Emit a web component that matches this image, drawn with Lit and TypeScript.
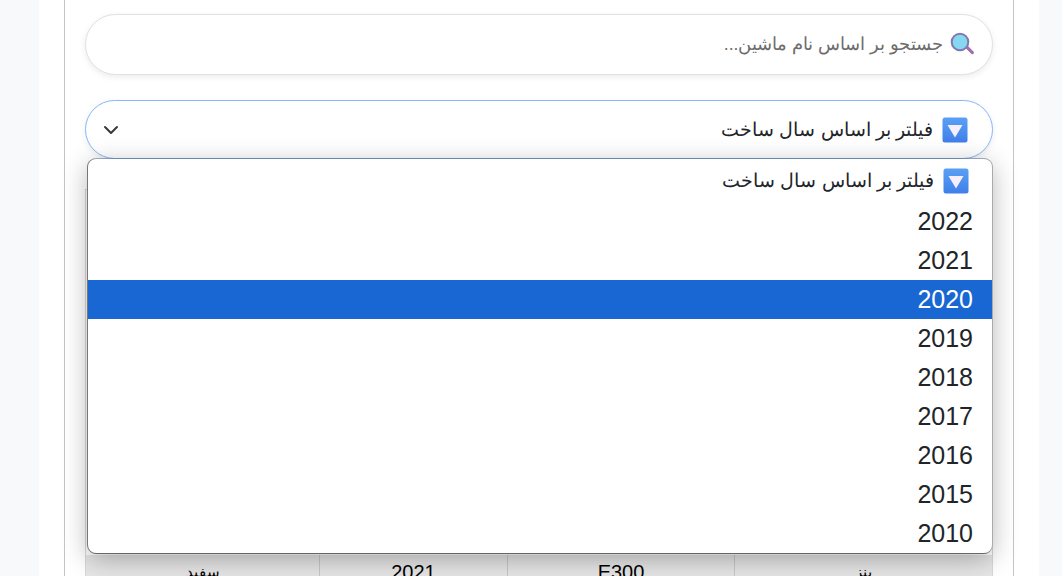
import { LitElement, html, css } from "lit";
import { customElement } from "lit/decorators.js";

const years = ["2022", "2021", "2020", "2019", "2018", "2017", "2016", "2015", "2010"];
const label = "فیلتر بر اساس سال ساخت";

const triangle = html`<svg class="tri" viewBox="0 0 26 26" aria-hidden="true">
  <defs><linearGradient id="g" x1="0" y1="0" x2="0" y2="1"><stop offset="0" stop-color="#5aa0f5"/><stop offset="1" stop-color="#3f7fe8"/></linearGradient></defs>
  <rect x="0.5" y="0.5" width="25" height="25" rx="2.5" fill="url(#g)"/>
  <path d="M5.5 8h15L13 20.5z" fill="#f6eefc"/>
</svg>`;

@customElement("app-root")
export class AppRoot extends LitElement {
  static styles = css`
    :host { display: block; height: 576px; overflow: hidden; background: #f8f9fb;
      font-family: "Liberation Sans", Arial, sans-serif; color: #212529; }
    .sheet { box-sizing: border-box; width: 1000px; height: 576px; margin-left: 39px; padding: 0 25px; background: #fff; }
    .card { box-sizing: border-box; width: 950px; height: 600px; border: 1px solid #c4c4c4; border-top: 0; padding: 14px 20px 0; display: flex; flex-direction: column; }
    .search { box-sizing: border-box; height: 61px; border: 1px solid #dfe1e8; border-radius: 31px; background: #fff;
      box-shadow: 0 2px 6px rgba(0,0,0,.08); display: flex; align-items: center; direction: rtl; padding: 0 17px; gap: 7px;
      font-size: 17.6px; color: #6c6c6c; }
    .mag { width: 25px; height: 25px; flex: none; }
    .wrap { position: relative; margin-top: 25px; }
    .select { box-sizing: border-box; height: 59px; border: 1px solid #86b7fe; border-radius: 30px; background: #fff;
      box-shadow: 0 2px 6px rgba(0,0,0,.08); display: flex; align-items: center; justify-content: space-between; direction: rtl;
      padding: 0 24px 0 17px; font-size: 18.8px; color: #212529; }
    .lab { display: flex; align-items: center; gap: 9px; }
    .tri { width: 26px; height: 26px; flex: none; }
    .chev { width: 16px; height: 16px; flex: none; }
    .menu { position: absolute; z-index: 2; left: 3px; right: 1px; top: 59px; background: #fff; border-radius: 8px;
      box-shadow: -1px 0 0 #777, 1px 0 0 #aaa, 0 1px 0 #666, 0 -1px 0 rgba(90,110,140,.55), 0 6px 26px rgba(0,0,0,.3);
      overflow: hidden; direction: rtl; font-size: 25px; color: #212529; }
    .opt { height: 39px; line-height: 39px; padding: 0 19px; }
    .opt.first { height: 43px; display: flex; align-items: center; gap: 9px; font-size: 18.8px; padding: 0 23px; line-height: normal; }
    .opt.on { background: #1967d2; color: #fff; }
    .table { margin-top: 30px; padding-top: 365px; border: 1px solid #d8d8d8; background: #fff; }
    .row { display: grid; grid-template-columns: 258px 227px 188px 233px; direction: rtl;
      background: #e6e6e6; font-size: 20px; color: #000; text-align: center; line-height: 34px; }
    .row div { border-left: 1px solid #c8c8c8; height: 40px; }
    .row div:last-child { border-left: 0; }
    .row .fa { font-size: 15px; }
  `;

  render() {
    return html`<div class="sheet"><div class="card">
      <div class="search">
        <svg class="mag" viewBox="0 0 25 25" aria-hidden="true">
          <path d="M15.5 16l2.2-2.2 6 6a1.6 1.6 0 0 1-2.2 2.2z" fill="#a06ea8"/>
          <circle cx="10" cy="10" r="8.3" fill="#85d8f0" stroke="#8577ad" stroke-width="2"/>
        </svg>
        <span>جستجو بر اساس نام ماشین...</span>
      </div>
      <div class="wrap">
        <div class="select">
          <span class="lab">${triangle}<span>${label}</span></span>
          <svg class="chev" viewBox="0 0 16 16" aria-hidden="true"><path d="M2 5l6 6 6-6" fill="none" stroke="#343a40" stroke-width="2" stroke-linecap="round" stroke-linejoin="round"/></svg>
        </div>
        <div class="menu">
          <div class="opt first">${triangle}<span>${label}</span></div>
          ${years.map((y) => html`<div class="opt ${y === "2020" ? "on" : ""}">${y}</div>`)}
        </div>
      </div>
      <div class="table"><div class="row"><div class="fa">بنز</div><div>E300</div><div>2021</div><div class="fa">سفید</div></div></div>
    </div></div>`;
  }
}
